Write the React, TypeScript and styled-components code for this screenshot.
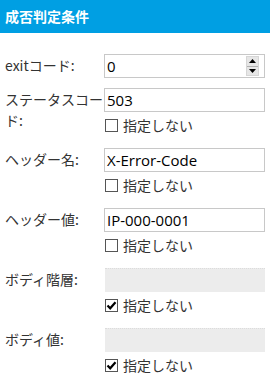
import React from "react";
import styled, { createGlobalStyle } from "styled-components";

const GlobalStyle = createGlobalStyle`
	html, body {
		margin: 0;
		padding: 0;
		background: #fff;
	}
	body {
		font-family: "Noto Sans CJK JP", "Noto Sans", sans-serif;
		color: #333;
	}
`;

type Rule = {
	label: string;
	value?: string;
	number?: boolean;
	disabled?: boolean;
	skip?: boolean;
	checked?: boolean;
};

const rules: Rule[] = [
	{ label: "exitコード:", value: "0", number: true },
	{ label: "ステータスコード:", value: "503", skip: true, checked: false },
	{ label: "ヘッダー名:", value: "X-Error-Code", skip: true, checked: false },
	{ label: "ヘッダー値:", value: "IP-000-0001", skip: true, checked: false },
	{ label: "ボディ階層:", disabled: true, skip: true, checked: true },
	{ label: "ボディ値:", disabled: true, skip: true, checked: true },
];

export default function App() {
	return (
		<Panel>
			<GlobalStyle />
			<Header>成否判定条件</Header>
			<Form>
				{rules.map((r) => (
					<Row key={r.label}>
						<Label>{r.label}</Label>
						<Field>
							{r.disabled ? (
								<DisabledBox />
							) : (
								<InputBox>
									<Value>{r.value}</Value>
									{r.number && (
										<Spinner>
											<SpinButton>
												<svg width="7" height="4" viewBox="0 0 7 4">
													<path d="M0 4 L3.5 0 L7 4 Z" fill="#000" />
												</svg>
											</SpinButton>
											<SpinButton>
												<svg width="7" height="4" viewBox="0 0 7 4">
													<path d="M0 0 L3.5 4 L7 0 Z" fill="#000" />
												</svg>
											</SpinButton>
										</Spinner>
									)}
								</InputBox>
							)}
							{r.skip && (
								<CheckLine>
									<CheckBox>
										{r.checked && (
											<svg width="11" height="11" viewBox="0 0 11 11">
												<path d="M1.5 5.5 L4.2 8.3 L9.5 2.2" stroke="#000" strokeWidth="2.2" fill="none" />
											</svg>
										)}
									</CheckBox>
									<span>指定しない</span>
								</CheckLine>
							)}
						</Field>
					</Row>
				))}
			</Form>
		</Panel>
	);
}

const Panel = styled.div`
	width: 270px;
	min-height: 376px;
	background: #fff;
`;

const Header = styled.div`
	height: 33px;
	background: #009fe3;
	color: #fff;
	font-size: 14px;
	font-weight: bold;
	line-height: 33px;
	padding-left: 5px;
`;

const Form = styled.div`
	display: flex;
	flex-direction: column;
	padding-top: 16px;
`;

const Row = styled.div`
	display: flex;
	align-items: flex-start;
	padding: 5px 0;
`;

const Label = styled.div`
	width: 99px;
	padding: 1px 0 0 5px;
	font-size: 14px;
	line-height: 21px;
	color: #333;
	flex-shrink: 0;
	word-break: break-all;
`;

const Field = styled.div`
	width: 161px;
	display: flex;
	flex-direction: column;
`;

const InputBox = styled.div`
	height: 24px;
	box-sizing: border-box;
	border: 1px solid #c8c8c8;
	display: flex;
	align-items: center;
	padding-left: 2px;
	background: #fff;
`;

const Value = styled.span`
	flex: 1;
	font-family: "Open Sans", "Noto Sans", sans-serif;
	font-size: 15px;
	color: #000;
	line-height: 20px;
`;

const Spinner = styled.div`
	width: 11px;
	height: 18px;
	margin-right: 5px;
	display: flex;
	flex-direction: column;
	border: 1px solid #d6d6d6;
	background: #e6e6e6;
`;

const SpinButton = styled.div`
	flex: 1;
	display: flex;
	align-items: center;
	justify-content: center;
	&:first-child {
		border-bottom: 1px solid #b0b0b0;
	}
`;

const DisabledBox = styled.div`
	height: 24px;
	box-sizing: border-box;
	margin-left: 1px;
	background: #ececec;
	border-top: 1px dotted #dcdcdc;
`;

const CheckLine = styled.div`
	display: flex;
	align-items: center;
	gap: 5px;
	padding: 3px 0 3px 1px;
	height: 20px;
	font-size: 14px;
	color: #333;
`;

const CheckBox = styled.span`
	width: 13px;
	height: 13px;
	box-sizing: border-box;
	border: 1px solid #555;
	background: #fff;
	display: flex;
	align-items: center;
	justify-content: center;
`;
